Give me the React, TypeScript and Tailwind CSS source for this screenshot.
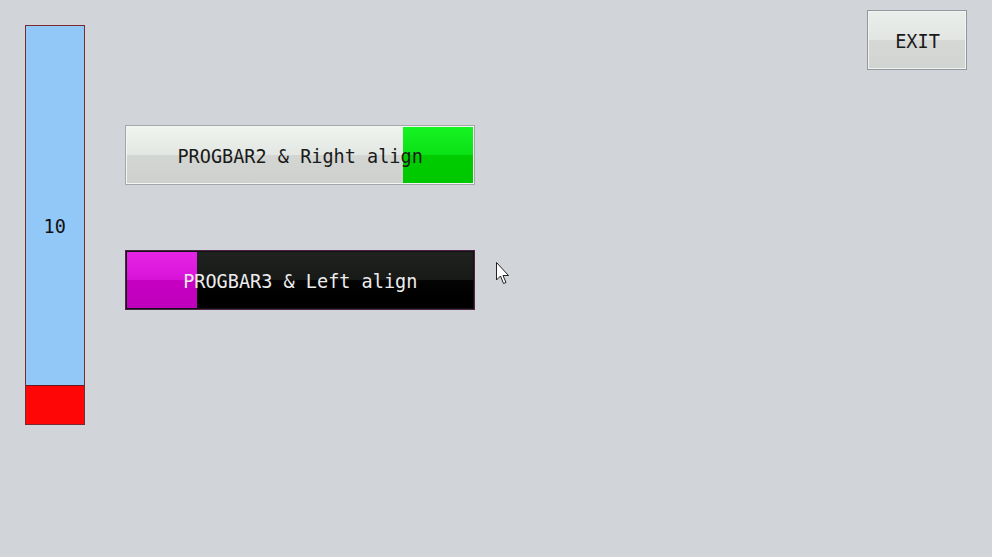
import React from "react";

const mono = { fontFamily: '"DejaVu Sans Mono", "Liberation Mono", monospace' };

function Label({ children, color }: { children: React.ReactNode; color: string }) {
  return (
    <div className="absolute inset-0 flex items-center justify-center">
      <span
        className={`mt-[3px] text-[19.5px] leading-none whitespace-nowrap scale-x-[0.95] ${color}`}
      >
        {children}
      </span>
    </div>
  );
}

export default function App() {
  return (
    <div
      className="relative flex items-start w-[992px] h-[557px] bg-[#d1d4d9] overflow-hidden"
      style={mono}
    >
      {/* Vertical progress bar */}
      <div className="relative ml-[25px] mt-[25px] w-[60px] h-[400px] border border-[#7a2a32] flex flex-col">
        <div className="flex-1 bg-[#92c8f8]" />
        <div className="h-[39px] bg-[#ff0606] border-t border-[#6a1a1a]" />
        <Label color="text-[#111]">10</Label>
      </div>

      {/* Horizontal bars */}
      <div className="ml-[40px] mt-[125px] flex flex-col gap-[65px]">
        {/* PROGBAR2 */}
        <div className="relative w-[350px] h-[60px] border border-[#a3a6aa] bg-[#f4f6f4] p-px">
          <div className="relative w-full h-full flex">
            <div className="flex-1 flex flex-col">
              <div className="h-1/2 bg-gradient-to-b from-[#eff4ee] to-[#e3e7e3]" />
              <div className="h-1/2 bg-gradient-to-b from-[#d3d6d2] to-[#cdd0cd]" />
            </div>
            <div className="w-[70px] flex flex-col">
              <div className="h-1/2 bg-gradient-to-b from-[#16f422] to-[#0ae016]" />
              <div className="h-1/2 bg-gradient-to-b from-[#00cc00] to-[#00c800]" />
            </div>
            <Label color="text-[#1a1a1a]">PROGBAR2 &amp; Right align</Label>
          </div>
        </div>

        {/* PROGBAR3 */}
        <div className="relative w-[350px] h-[60px] border border-[#50234a] bg-[#111] p-px">
          <div className="relative w-full h-full flex">
            <div className="w-[70px] flex flex-col">
              <div className="h-1/2 bg-gradient-to-b from-[#e624e6] to-[#d812d8]" />
              <div className="h-1/2 bg-gradient-to-b from-[#c600c2] to-[#c000bc]" />
            </div>
            <div className="flex-1 flex flex-col">
              <div className="h-1/2 bg-gradient-to-b from-[#202220] to-[#181a18]" />
              <div className="h-1/2 bg-gradient-to-b from-[#050505] to-[#000000]" />
            </div>
            <Label color="text-[#ececec]">PROGBAR3 &amp; Left align</Label>
          </div>
        </div>
      </div>

      {/* EXIT button */}
      <div className="ml-auto mr-[25px] mt-[10px] w-[100px] h-[60px] border border-[#93979b] bg-[#f2f4f2] p-px">
        <div className="relative w-full h-full flex flex-col">
          <div className="h-1/2 bg-gradient-to-b from-[#eaeeea] to-[#e2e5e2]" />
          <div className="h-1/2 bg-gradient-to-b from-[#d6d8d6] to-[#d2d4d2]" />
          <Label color="text-[#1a1a1a]">EXIT</Label>
        </div>
      </div>

      {/* Mouse cursor */}
      <svg
        className="absolute left-[495px] top-[261px]"
        width="18"
        height="26"
        viewBox="0 0 18 26"
      >
        <path
          d="M1.5 1.5 L1.5 19 L5.5 15 L8.5 22.5 L11 21.5 L8 14.5 L13.5 14.5 Z"
          fill="#fff"
          stroke="#222"
          strokeWidth="1"
          strokeLinejoin="miter"
        />
      </svg>
    </div>
  );
}
